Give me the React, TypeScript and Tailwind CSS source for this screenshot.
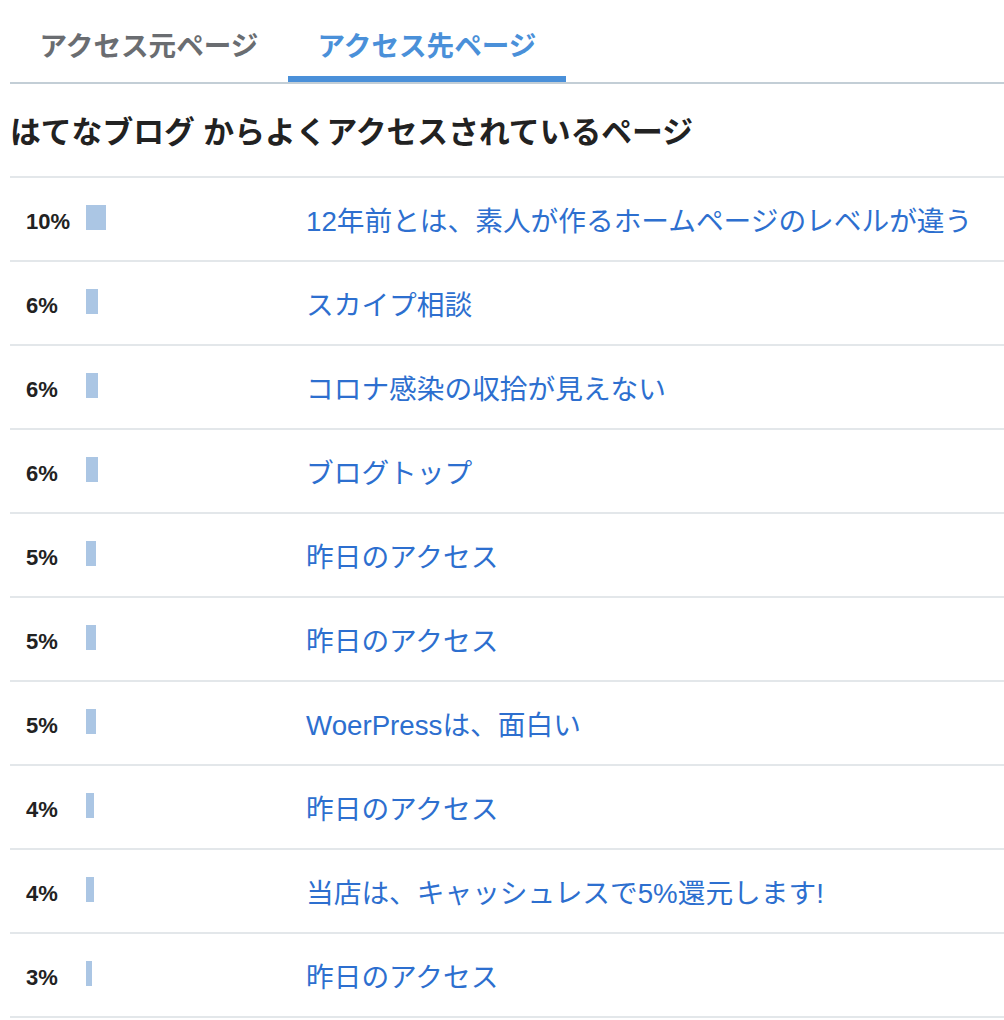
import React from "react";

const rows: { pct: number; title: string }[] = [
  { pct: 10, title: "12年前とは、素人が作るホームページのレベルが違う" },
  { pct: 6, title: "スカイプ相談" },
  { pct: 6, title: "コロナ感染の収拾が見えない" },
  { pct: 6, title: "ブログトップ" },
  { pct: 5, title: "昨日のアクセス" },
  { pct: 5, title: "昨日のアクセス" },
  { pct: 5, title: "WoerPressは、面白い" },
  { pct: 4, title: "昨日のアクセス" },
  { pct: 4, title: "当店は、キャッシュレスで5%還元します!" },
  { pct: 3, title: "昨日のアクセス" },
];

const jp = { fontFamily: '"Liberation Sans", "Noto Sans CJK JP", sans-serif' };

export default function App() {
  return (
    <div className="bg-white w-[1004px] min-h-[1020px] pl-[10px]" style={jp}>
      <div className="flex border-b-2 border-[#c3ced6]">
        <div className="w-[278px] h-[82px] flex items-end justify-center border-b-[6px] border-transparent">
          <span className="text-[27.6px] leading-[38px] font-bold text-[#6a6d71] pb-[10px]">アクセス元ページ</span>
        </div>
        <div className="w-[278px] h-[82px] flex items-end justify-center border-b-[6px] border-[#4a90d9]">
          <span className="text-[27.6px] leading-[38px] font-bold text-[#4a90d9] pb-[10px]">アクセス先ページ</span>
        </div>
      </div>
      <h2 className="mt-[30px] mb-[24px] text-[30.8px] leading-[38px] font-bold text-[#222]">
        はてなブログ からよくアクセスされているページ
      </h2>
      <div className="border-t-2 border-[#e3e7ea]">
        {rows.map((r, i) => (
          <div key={i} className="flex items-center h-[84px] border-b-2 border-[#e3e7ea]">
            <div className="w-[280px] pl-4 flex items-center">
              <span className="w-[60px] text-[22px] font-bold text-[#222] pt-[4px]" style={{ fontFamily: '"Liberation Sans", sans-serif' }}>
                {r.pct}%
              </span>
              <span className="h-[25px] bg-[#abc6e4] -mt-[3px]" style={{ width: r.pct * 2 }} />
            </div>
            <a className="pl-4 pt-[5px] text-[27.7px] leading-[38px] text-[#2d6fcf]" href="#">
              {r.title}
            </a>
          </div>
        ))}
      </div>
    </div>
  );
}
